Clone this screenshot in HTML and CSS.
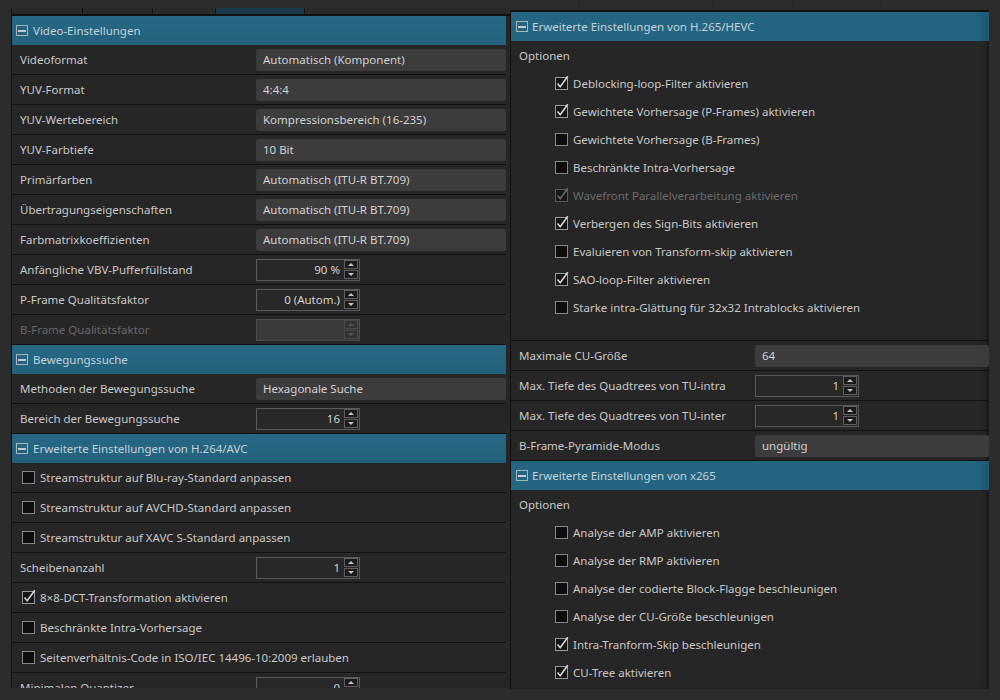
FILE: index.html
```html
<!DOCTYPE html>
<html>
<head>
<meta charset="utf-8">
<link rel="stylesheet" href="styles.css">
</head>
<body>
<div class="app">
  <div class="col-left">
    <div class="tabs">
      <span class="tab t1"></span><span class="tab t2"></span><span class="tab t3"></span><span class="tab t4 sel"></span><span class="tab t5"></span>
    </div>
    <div class="panel panel-left">
      <div class="sec-head"><span class="toggle"></span>Video-Einstellungen</div>
      <div class="row"><span class="lbl">Videoformat</span><span class="combo">Automatisch (Komponent)</span></div>
      <div class="row"><span class="lbl">YUV-Format</span><span class="combo">4:4:4</span></div>
      <div class="row"><span class="lbl">YUV-Wertebereich</span><span class="combo">Kompressionsbereich (16-235)</span></div>
      <div class="row"><span class="lbl">YUV-Farbtiefe</span><span class="combo">10 Bit</span></div>
      <div class="row"><span class="lbl">Primärfarben</span><span class="combo">Automatisch (ITU-R BT.709)</span></div>
      <div class="row"><span class="lbl">Übertragungseigenschaften</span><span class="combo">Automatisch (ITU-R BT.709)</span></div>
      <div class="row"><span class="lbl">Farbmatrixkoeffizienten</span><span class="combo">Automatisch (ITU-R BT.709)</span></div>
      <div class="row"><span class="lbl">Anfängliche VBV-Pufferfüllstand</span><span class="spin"><span class="val">90 %</span><span class="btns"><span class="btn up"></span><span class="btn dn"></span></span></span></div>
      <div class="row"><span class="lbl">P-Frame Qualitätsfaktor</span><span class="spin"><span class="val">0 (Autom.)</span><span class="btns"><span class="btn up"></span><span class="btn dn"></span></span></span></div>
      <div class="row"><span class="lbl dis">B-Frame Qualitätsfaktor</span><span class="spin off"><span class="val"></span><span class="btns"><span class="btn up"></span><span class="btn dn"></span></span></span></div>
      <div class="sec-head"><span class="toggle"></span>Bewegungssuche</div>
      <div class="row"><span class="lbl">Methoden der Bewegungssuche</span><span class="combo">Hexagonale Suche</span></div>
      <div class="row"><span class="lbl">Bereich der Bewegungssuche</span><span class="spin"><span class="val">16</span><span class="btns"><span class="btn up"></span><span class="btn dn"></span></span></span></div>
      <div class="sec-head"><span class="toggle"></span>Erweiterte Einstellungen von H.264/AVC</div>
      <div class="row chk-row"><span class="cb"></span>Streamstruktur auf Blu-ray-Standard anpassen</div>
      <div class="row chk-row"><span class="cb"></span>Streamstruktur auf AVCHD-Standard anpassen</div>
      <div class="row chk-row"><span class="cb"></span>Streamstruktur auf XAVC S-Standard anpassen</div>
      <div class="row"><span class="lbl">Scheibenanzahl</span><span class="spin"><span class="val">1</span><span class="btns"><span class="btn up"></span><span class="btn dn"></span></span></span></div>
      <div class="row chk-row"><span class="cb on"><svg viewBox="0 0 15 19" width="15" height="19"><polyline points="2.5,9.5 5.2,12.8 12.8,2.2" /></svg></span>8×8-DCT-Transformation aktivieren</div>
      <div class="row chk-row"><span class="cb"></span>Beschränkte Intra-Vorhersage</div>
      <div class="row chk-row"><span class="cb"></span>Seitenverhältnis-Code in ISO/IEC 14496-10:2009 erlauben</div>
      <div class="row"><span class="lbl">Minimalen Quantizer</span><span class="spin"><span class="val">0</span><span class="btns"><span class="btn up"></span><span class="btn dn"></span></span></span></div>
    </div>
  </div>
  <div class="col-right">
    <div class="tabs-r">
      <span class="tr r1"></span><span class="tr r2"></span><span class="tr r3"></span><span class="tr r4"></span><span class="tr r5"></span>
    </div>
    <div class="panel panel-right">
      <div class="sec-head"><span class="toggle"></span>Erweiterte Einstellungen von H.265/HEVC</div>
      <div class="opt-sec">
        <div class="opt-title">Optionen</div>
        <div class="opt"><span class="cb on"><svg viewBox="0 0 15 19" width="15" height="19"><polyline points="2.5,9.5 5.2,12.8 12.8,2.2" /></svg></span>Deblocking-loop-Filter aktivieren</div>
        <div class="opt"><span class="cb on"><svg viewBox="0 0 15 19" width="15" height="19"><polyline points="2.5,9.5 5.2,12.8 12.8,2.2" /></svg></span>Gewichtete Vorhersage (P-Frames) aktivieren</div>
        <div class="opt"><span class="cb"></span>Gewichtete Vorhersage (B-Frames)</div>
        <div class="opt"><span class="cb"></span>Beschränkte Intra-Vorhersage</div>
        <div class="opt dis"><span class="cb on off"><svg viewBox="0 0 15 19" width="15" height="19"><polyline points="2.5,9.5 5.2,12.8 12.8,2.2" /></svg></span>Wavefront Parallelverarbeitung aktivieren</div>
        <div class="opt"><span class="cb on"><svg viewBox="0 0 15 19" width="15" height="19"><polyline points="2.5,9.5 5.2,12.8 12.8,2.2" /></svg></span>Verbergen des Sign-Bits aktivieren</div>
        <div class="opt"><span class="cb"></span>Evaluieren von Transform-skip aktivieren</div>
        <div class="opt"><span class="cb on"><svg viewBox="0 0 15 19" width="15" height="19"><polyline points="2.5,9.5 5.2,12.8 12.8,2.2" /></svg></span>SAO-loop-Filter aktivieren</div>
        <div class="opt"><span class="cb"></span>Starke intra-Glättung für 32x32 Intrablocks aktivieren</div>
      </div>
      <div class="row"><span class="lbl">Maximale CU-Größe</span><span class="combo">64</span></div>
      <div class="row"><span class="lbl">Max. Tiefe des Quadtrees von TU-intra</span><span class="spin"><span class="val">1</span><span class="btns"><span class="btn up"></span><span class="btn dn"></span></span></span></div>
      <div class="row"><span class="lbl">Max. Tiefe des Quadtrees von TU-inter</span><span class="spin"><span class="val">1</span><span class="btns"><span class="btn up"></span><span class="btn dn"></span></span></span></div>
      <div class="row"><span class="lbl">B-Frame-Pyramide-Modus</span><span class="combo">ungültig</span></div>
      <div class="sec-head"><span class="toggle"></span>Erweiterte Einstellungen von x265</div>
      <div class="opt-sec2">
        <div class="opt-title">Optionen</div>
        <div class="opt"><span class="cb"></span>Analyse der AMP aktivieren</div>
        <div class="opt"><span class="cb"></span>Analyse der RMP aktivieren</div>
        <div class="opt"><span class="cb"></span>Analyse der codierte Block-Flagge beschleunigen</div>
        <div class="opt"><span class="cb"></span>Analyse der CU-Größe beschleunigen</div>
        <div class="opt"><span class="cb on"><svg viewBox="0 0 15 19" width="15" height="19"><polyline points="2.5,9.5 5.2,12.8 12.8,2.2" /></svg></span>Intra-Tranform-Skip beschleunigen</div>
        <div class="opt"><span class="cb on"><svg viewBox="0 0 15 19" width="15" height="19"><polyline points="2.5,9.5 5.2,12.8 12.8,2.2" /></svg></span>CU-Tree aktivieren</div>
      </div>
    </div>
  </div>
</div>
</body>
</html>
```

FILE: styles.css
```css
html, body {
  margin: 0;
  padding: 0;
}
body {
  background: #2c2c2c;
  font-family: "Noto Sans", "DejaVu Sans", sans-serif;
  font-size: 11.5px;
  color: #c8c8c8;
}
.app {
  display: flex;
  width: 1000px;
  height: 700px;
  padding-left: 11px;
  box-sizing: border-box;
  overflow: hidden;
}
.col-left {
  width: 499px;
  flex: none;
  display: flex;
  flex-direction: column;
}
.tabs {
  height: 14px;
  display: flex;
  align-items: flex-end;
}
.tab {
  height: 6px;
  border-left: 1px solid #111;
  background: #292929;
  box-sizing: border-box;
}
.t1 { width: 71px; }
.t2 { width: 70px; }
.t3 { width: 63px; }
.t4 { width: 89px; }
.t5 { flex: 1; }
.tab.sel { background: #1c3a4b; }

.panel {
  background: #262626;
  border-left: 1px solid #111;
  border-top: 2px solid #111;
  box-sizing: border-box;
  overflow: hidden;
}
.panel-left {
  height: 674px;
  padding-right: 4px;
}
.col-right {
  width: 479px;
  flex: none;
  display: flex;
  flex-direction: column;
}
.tabs-r {
  height: 10px;
  display: flex;
}
.tr {
  height: 9px;
  border-right: 1px solid #262626;
  box-sizing: border-box;
}
.r1 { width: 70px; }
.r2 { width: 133px; }
.r3 { width: 80px; }
.r4 { width: 89px; }
.r5 { flex: 1; border-right: none; }
.panel-right {
  height: 679px;
  box-shadow: inset -5px 0 5px -3px rgba(0, 0, 0, 0.45);
}

.sec-head {
  height: 29px;
  background: linear-gradient(to bottom, #266884, #23627d);
  display: flex;
  align-items: center;
  color: #c5d1d7;
}
.panel-right .sec-head {
  background: linear-gradient(to right, #246582 97%, #1f5670);
}
.toggle {
  width: 12px;
  height: 11px;
  border: 1px solid #a7b4ba;
  box-sizing: border-box;
  margin: 0 5px 0 4px;
  display: flex;
  align-items: center;
  justify-content: center;
  flex: none;
}
.toggle::after {
  content: "";
  width: 8px;
  height: 2px;
  background: #c2ccd0;
}
.panel-right .toggle {
  margin: 0 4px 0 5px;
}

.row {
  height: 29px;
  border-bottom: 1px solid #111;
  display: flex;
  align-items: center;
  white-space: nowrap;
}
.lbl {
  width: 244px;
  padding-left: 8px;
  box-sizing: border-box;
  flex: none;
}
.lbl.dis { color: #666; }
.combo {
  flex: 1;
  height: 22px;
  background: #3c3c3c;
  border-radius: 2px;
  display: flex;
  align-items: center;
  padding-left: 7px;
  color: #d2d2d2;
}
.spin {
  width: 104px;
  height: 22px;
  border: 1px solid #5a5a5a;
  box-sizing: border-box;
  background: #282828;
  display: flex;
  align-items: center;
  justify-content: flex-end;
  padding-right: 1px;
  color: #d2d2d2;
}
.spin .val { margin-right: 4px; }
.btns {
  display: flex;
  flex-direction: column;
  gap: 1px;
  width: 14px;
}
.btn {
  height: 9px;
  background: #1b1b1b;
  border: 1px solid #5e5e5e;
  box-sizing: border-box;
  display: flex;
  align-items: center;
  justify-content: center;
}
.btn.up::after {
  content: "";
  border-left: 3px solid transparent;
  border-right: 3px solid transparent;
  border-bottom: 3px solid #c4c4c4;
}
.btn.dn::after {
  content: "";
  border-left: 3px solid transparent;
  border-right: 3px solid transparent;
  border-top: 3px solid #c4c4c4;
}
.spin.off {
  background: #3a3a3a;
  border-color: #4c4c4c;
}
.spin.off .btn {
  background: #333;
  border-color: #474747;
}
.spin.off .btn.up::after { border-bottom-color: #555; }
.spin.off .btn.dn::after { border-top-color: #555; }

.cb {
  width: 13px;
  height: 13px;
  border: 1px solid #858585;
  background: #0e0e0e;
  box-sizing: border-box;
  flex: none;
  position: relative;
}
.cb svg {
  position: absolute;
  left: -1px;
  top: -4px;
}
.cb polyline {
  fill: none;
  stroke: #d6d6d6;
  stroke-width: 1.6;
}
.cb.on {
  border-color: #9a9a9a;
  background: #161616;
}
.cb.off { border-color: #5a5a5a; }
.cb.off polyline { stroke: #6a6a6a; }

.chk-row {
  padding-left: 10px;
  gap: 5px;
}
.opt-sec {
  padding-bottom: 19px;
  border-bottom: 1px solid #111;
}
.opt-title {
  height: 28px;
  display: flex;
  align-items: center;
  padding-left: 8px;
}
.opt {
  height: 28px;
  display: flex;
  align-items: center;
  padding-left: 44px;
  gap: 5px;
  white-space: nowrap;
}
.opt.dis { color: #6a6a6a; }
```
